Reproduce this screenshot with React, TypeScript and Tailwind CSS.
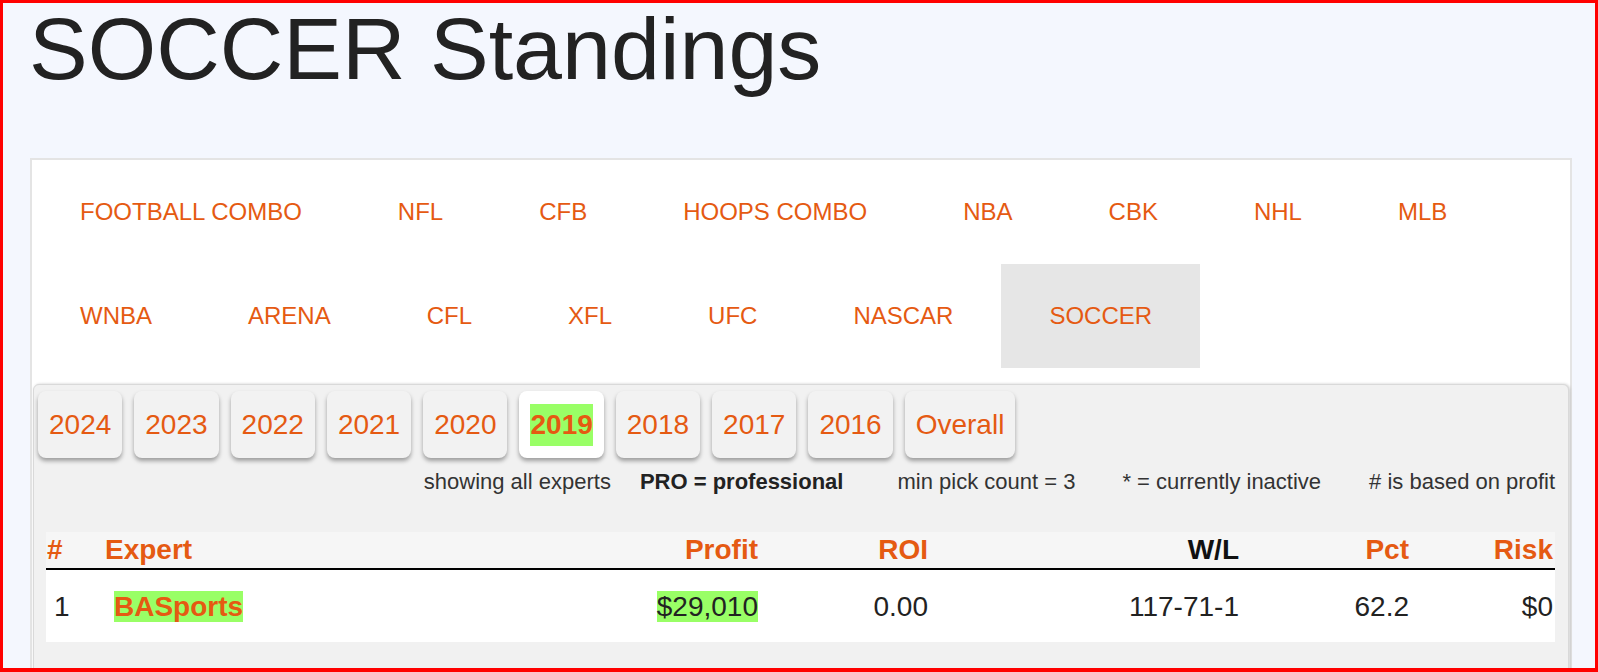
import React from 'react';

const sports = [
  'FOOTBALL COMBO', 'NFL', 'CFB', 'HOOPS COMBO', 'NBA', 'CBK', 'NHL', 'MLB',
  'WNBA', 'ARENA', 'CFL', 'XFL', 'UFC', 'NASCAR', 'SOCCER',
];

const years = ['2024', '2023', '2022', '2021', '2020', '2019', '2018', '2017', '2016', 'Overall'];

const App: React.FC = () => {
  return (
    <div className="h-[672px] overflow-hidden border-[3px] border-b-4 border-[#ff0000] bg-[#f4f7fe] font-['Liberation_Sans',Arial,sans-serif]">
      <h1 className="mt-[2px] pl-[26px] text-[88px] leading-[88px] font-normal text-[#222]">SOCCER Standings</h1>

      <div className="ml-[27px] mr-[23px] mt-[65px] border-2 border-b-0 border-[#e4e4e4] bg-white">
        {/* sport menu */}
        <ul className="flex flex-wrap">
          {sports.map((s) => (
            <li
              key={s}
              className={`flex h-[104px] items-center px-12 text-[24px] text-[#e55a12] ${s === 'SOCCER' ? 'bg-[#e6e6e6]' : ''}`}
            >
              {s}
            </li>
          ))}
        </ul>

        <div className="mx-[1px] mt-[16px] rounded-t-[6px] border border-[#d9d9d9] bg-[#f1f1f1] pb-[40px] shadow-[1px_0_3px_rgba(0,0,0,0.2)]">
          {/* season tabs */}
          <div className="flex gap-[12px] pl-[4px] pt-[6px]">
            {years.map((y) => (
              <div
                key={y}
                className={`flex h-[67px] items-center rounded-[8px] px-[11px] text-[28px] text-[#e55a12] shadow-[0_3px_4px_rgba(0,0,0,0.35)] ${y === '2019' ? 'bg-white font-bold' : 'bg-[#f2f2f2]'}`}
              >
                {y === '2019' ? <span className="bg-[#99ff66]">{y}</span> : y}
              </div>
            ))}
          </div>

          <div className="mt-[7px] flex justify-end pr-[13px] text-[22px] text-[#333]">
            <span>showing all experts</span>
            <span className="ml-[29px] font-bold text-[#222]">PRO = professional</span>
            <span className="ml-[54px]">min pick count = 3</span>
            <span className="ml-[47px]">* = currently inactive</span>
            <span className="ml-[48px]"># is based on profit</span>
          </div>

          {/* standings table */}
          <div className="mt-[34px] pl-[12px] pr-[13px]">
            <div className="grid h-[36px] grid-cols-[59px_1fr_158px_170px_311px_170px_146px] bg-[#f6f6f6] text-[28px] font-bold leading-[36px] text-[#e55a12]">
              <div className="pl-[1px]">#</div>
              <div>Expert</div>
              <div className="text-right">Profit</div>
              <div className="text-right">ROI</div>
              <div className="text-right text-[#111]">W/L</div>
              <div className="text-right">Pct</div>
              <div className="pr-[2px] text-right">Risk</div>
            </div>
            <div className="h-[2px] bg-black" />
            <div className="grid h-[72px] grid-cols-[59px_1fr_158px_170px_311px_170px_146px] items-center bg-white pt-[1px] text-[28px] leading-[32px] text-[#222]">
              <div className="pl-[8px]">1</div>
              <div className="pl-[9px]">
                <span className="bg-[#99ff66] font-bold text-[#e55a12]">BASports</span>
              </div>
              <div className="text-right">
                <span className="bg-[#99ff66]">$29,010</span>
              </div>
              <div className="text-right">0.00</div>
              <div className="text-right">117-71-1</div>
              <div className="text-right">62.2</div>
              <div className="pr-[2px] text-right">$0</div>
            </div>
          </div>
        </div>
      </div>
    </div>
  );
};

export default App;
